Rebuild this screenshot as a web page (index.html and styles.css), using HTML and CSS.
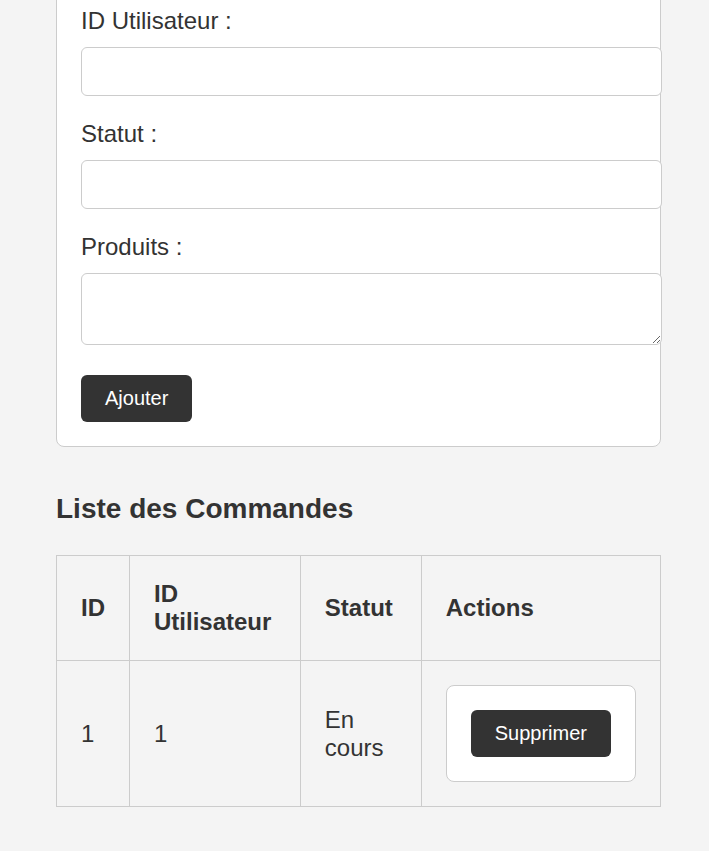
FILE: index.html
```html
<!DOCTYPE html>
<html lang="fr">
<head>
<meta charset="utf-8">
<title>Commandes</title>
<link rel="stylesheet" href="styles.css">
</head>
<body>
<main class="container">
  <section class="card form-card">
    <form class="order-form">
      <label class="field-label" for="userId">ID Utilisateur :</label>
      <input class="field" id="userId" type="text">
      <label class="field-label" for="status">Statut :</label>
      <input class="field" id="status" type="text">
      <label class="field-label" for="products">Produits :</label>
      <textarea class="field field-area" id="products" rows="2"></textarea>
      <div class="form-actions">
        <button class="btn" type="button">Ajouter</button>
      </div>
    </form>
  </section>

  <h2 class="section-title">Liste des Commandes</h2>

  <table class="orders">
    <thead>
      <tr>
        <th>ID</th>
        <th>ID Utilisateur</th>
        <th>Statut</th>
        <th>Actions</th>
      </tr>
    </thead>
    <tbody>
      <tr>
        <td>1</td>
        <td>1</td>
        <td>En cours</td>
        <td><div class="card action-box"><button class="btn" type="button">Supprimer</button></div></td>
      </tr>
    </tbody>
  </table>
</main>
</body>
</html>
```

FILE: styles.css
```css
html, body {
  margin: 0;
  padding: 0;
}

body {
  background: #f4f4f4;
  color: #333;
  font-family: "Liberation Sans", Arial, sans-serif;
  font-size: 24px;
  line-height: normal;
}

.container {
  width: 605px;
  margin: -18px 0 0 56px;
  padding-bottom: 45px;
}

.card {
  background: #fff;
  border: 1px solid #ccc;
  border-radius: 8px;
  padding: 24px;
}

.order-form {
  margin: 0;
}

.field-label {
  display: block;
  margin-bottom: 12px;
}

.field {
  display: block;
  width: 100%;
  margin: 0 0 24px;
  padding: 12px;
  border: 1px solid #ccc;
  border-radius: 6px;
  background: #fff;
  font-family: inherit;
  font-size: 20px;
  line-height: normal;
  color: #333;
}

.field-area {
  margin-bottom: 30px;
}

.form-actions {
  display: flex;
}

.btn {
  background: #333;
  color: #fff;
  border: none;
  border-radius: 6px;
  padding: 12px 24px;
  font-family: inherit;
  font-size: 20px;
  line-height: normal;
  cursor: pointer;
}

.section-title {
  font-size: 28px;
  font-weight: bold;
  margin: 46px 0 30px;
  line-height: normal;
}

.orders {
  width: 100%;
  border-collapse: collapse;
  border: 1px solid #ccc;
}

.orders th,
.orders td {
  border: 1px solid #ccc;
  padding: 24px;
  text-align: left;
  vertical-align: middle;
}

.orders th {
  font-weight: bold;
}

.action-box {
  display: inline-block;
  vertical-align: middle;
}
```
